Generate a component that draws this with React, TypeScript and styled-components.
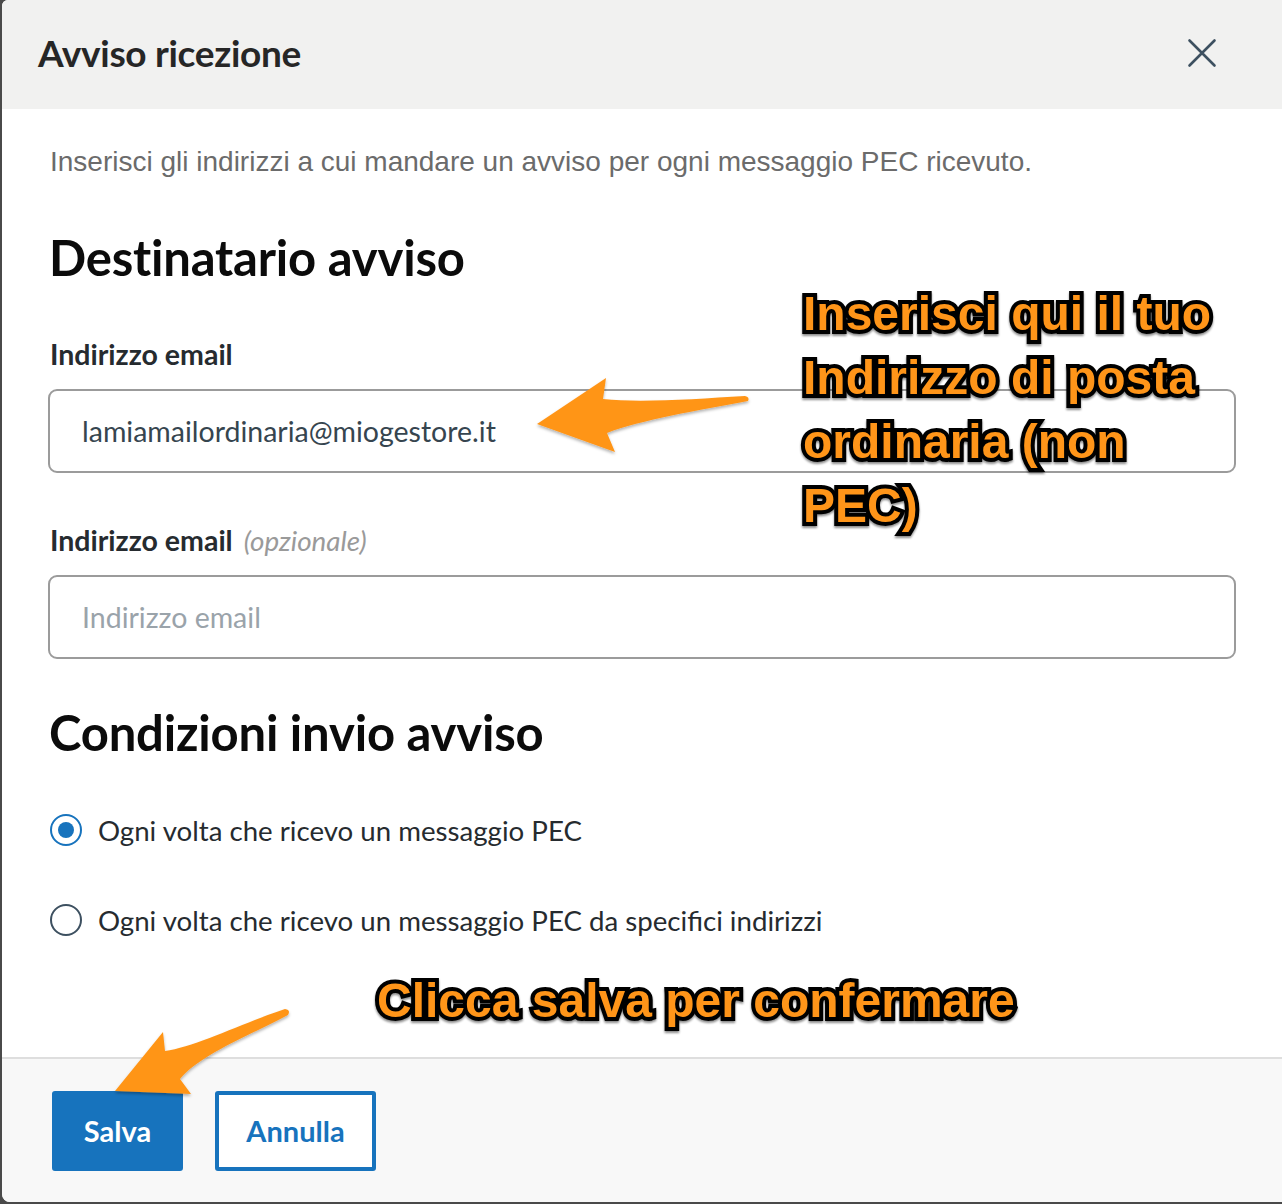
import styled, { createGlobalStyle } from 'styled-components';

const GlobalStyle = createGlobalStyle`
  html, body {
    margin: 0;
    padding: 0;
    background: #4a4a4a;
  }
  * {
    box-sizing: border-box;
  }
`;

const Page = styled.div`
  position: relative;
  width: 1282px;
  height: 1204px;
  overflow: hidden;
  padding: 0 0 2px 2px;
`;

const Modal = styled.div`
  display: flex;
  flex-direction: column;
  height: 1202px;
  background: #fff;
  border-radius: 6px 0 0 8px;
  overflow: hidden;
  font-family: Lato, sans-serif;
`;

const Header = styled.header`
  display: flex;
  align-items: center;
  justify-content: space-between;
  height: 109px;
  padding: 0 64px 4px 36px;
  background: #f1f1f0;
`;

const ModalTitle = styled.h1`
  margin: 0;
  font-size: 37px;
  font-weight: 700;
  letter-spacing: -0.3px;
  color: #262626;
`;

const CloseButton = styled.button`
  display: flex;
  width: 32px;
  height: 32px;
  margin-top: 1px;
  padding: 0;
  border: 0;
  background: none;
`;

const Body = styled.div`
  flex: 1;
  padding: 0 46px 0 46px;
`;

const Intro = styled.p`
  margin: 0 0 0 2px;
  padding-top: 37px;
  font-family: 'Liberation Sans', Arial, sans-serif;
  font-size: 28px;
  line-height: 32px;
  color: #6b6b6b;
`;

const SectionTitle = styled.h2<{ $top: number }>`
  margin: ${(p) => p.$top}px 0 0 1px;
  font-size: 49px;
  line-height: 56px;
  font-weight: 700;
  letter-spacing: -0.2px;
  color: #0b0b0b;
`;

const Field = styled.div<{ $top: number }>`
  margin-top: ${(p) => p.$top}px;
`;

const Label = styled.label`
  display: block;
  height: 34px;
  margin: 0 0 18px 2px;
  font-size: 28.5px;
  line-height: 34px;
  font-weight: 700;
  color: #262b2f;
`;

const Optional = styled.em`
  margin-left: 11px;
  font-size: 27.8px;
  font-weight: 400;
  color: #9a9a9a;
`;

const Input = styled.input`
  display: block;
  width: 100%;
  height: 84px;
  padding: 0 32px;
  border: 2px solid #9b9b9b;
  border-radius: 9px;
  background: #fff;
  font-family: Lato, sans-serif;
  font-size: 28.5px;
  color: #36454f;
  &::placeholder {
    color: #9aa3aa;
    opacity: 1;
  }
`;

const RadioGroup = styled.div`
  display: flex;
  flex-direction: column;
  gap: 50px;
  margin: 50px 0 0 2px;
`;

const RadioRow = styled.div`
  display: flex;
  align-items: center;
  gap: 16px;
  height: 40px;
  font-size: 27.65px;
  color: #262b2f;
`;

const RadioCircle = styled.span<{ $checked?: boolean }>`
  display: flex;
  align-items: center;
  justify-content: center;
  width: 32px;
  height: 32px;
  border: 2px solid ${(p) => (p.$checked ? '#1773bd' : '#3d5060')};
  border-radius: 50%;
  &::after {
    content: '';
    display: ${(p) => (p.$checked ? 'block' : 'none')};
    width: 16px;
    height: 16px;
    border-radius: 50%;
    background: #1773bd;
  }
`;

const Footer = styled.footer`
  display: flex;
  gap: 32px;
  height: 145px;
  padding: 32px 0 0 50px;
  border-top: 2px solid #dedede;
  background: #f8f8f8;
`;

const Button = styled.button<{ $primary?: boolean }>`
  height: 80px;
  width: ${(p) => (p.$primary ? '131px' : '161px')};
  padding: 0 0 2px;
  border: 4px solid #1773bd;
  border-radius: 3px;
  background: ${(p) => (p.$primary ? '#1773bd' : '#fff')};
  color: ${(p) => (p.$primary ? '#fff' : '#1773bd')};
  font-family: Lato, sans-serif;
  font-size: 29px;
  font-weight: 700;
`;

const Callout = styled.div<{ $left: number; $top: number; $width: number }>`
  position: absolute;
  left: ${(p) => p.$left}px;
  top: ${(p) => p.$top}px;
  width: ${(p) => p.$width}px;
  font-family: 'Liberation Sans', Arial, sans-serif;
  font-size: 48px;
  line-height: 64px;
  font-weight: 700;
  color: #ff9519;
  -webkit-text-stroke: 8px #000;
  paint-order: stroke fill;
  filter: drop-shadow(0 2px 1px rgba(0, 0, 0, 0.45));
`;

const ArrowLayer = styled.svg`
  position: absolute;
  left: 0;
  top: 0;
  pointer-events: none;
`;

export default function App() {
  return (
    <>
      <GlobalStyle />
      <Page>
        <Modal>
          <Header>
            <ModalTitle>Avviso ricezione</ModalTitle>
            <CloseButton aria-label="Chiudi">
              <svg width="32" height="32" viewBox="0 0 32 32">
                <path d="M3.5 3.5 L28.5 28.5 M28.5 3.5 L3.5 28.5" stroke="#3d5060" strokeWidth="2.6" strokeLinecap="round" />
              </svg>
            </CloseButton>
          </Header>
          <Body>
            <Intro>Inserisci gli indirizzi a cui mandare un avviso per ogni messaggio PEC ricevuto.</Intro>
            <SectionTitle $top={51}>Destinatario avviso</SectionTitle>
            <Field $top={52}>
              <Label>Indirizzo email</Label>
              <Input defaultValue="lamiamailordinaria@miogestore.it" />
            </Field>
            <Field $top={50}>
              <Label>
                Indirizzo email<Optional>(opzionale)</Optional>
              </Label>
              <Input placeholder="Indirizzo email" />
            </Field>
            <SectionTitle $top={45}>Condizioni invio avviso</SectionTitle>
            <RadioGroup>
              <RadioRow>
                <RadioCircle $checked />
                Ogni volta che ricevo un messaggio PEC
              </RadioRow>
              <RadioRow>
                <RadioCircle />
                Ogni volta che ricevo un messaggio PEC da specifici indirizzi
              </RadioRow>
            </RadioGroup>
          </Body>
          <Footer>
            <Button $primary>Salva</Button>
            <Button>Annulla</Button>
          </Footer>
        </Modal>

        <ArrowLayer width="1282" height="1204" viewBox="0 0 1282 1204">
          <defs>
            <filter id="arrowShadow" x="-10%" y="-10%" width="120%" height="130%">
              <feDropShadow dx="0" dy="2" stdDeviation="1.5" floodColor="#000" floodOpacity="0.3" />
            </filter>
          </defs>
          <path
            d="M537 424 L606 378 L603 399 C640 403 695 399 745 396 Q750 397 748 401 C700 410 640 420 607 433 L615 452 Z"
            fill="#ff9519"
            filter="url(#arrowShadow)"
          />
          <path
            d="M115 1091 L163 1032 L165 1051 C195 1047 245 1022 285 1009 Q291 1010 288 1015 C250 1035 200 1055 180 1079 L191 1094 Z"
            fill="#ff9519"
            filter="url(#arrowShadow)"
          />
        </ArrowLayer>

        <Callout $left={803} $top={282} $width={440}>
          Inserisci qui il tuo Indirizzo di posta ordinaria (non PEC)
        </Callout>
        <Callout $left={377} $top={969} $width={700}>
          Clicca salva per confermare
        </Callout>
      </Page>
    </>
  );
}
